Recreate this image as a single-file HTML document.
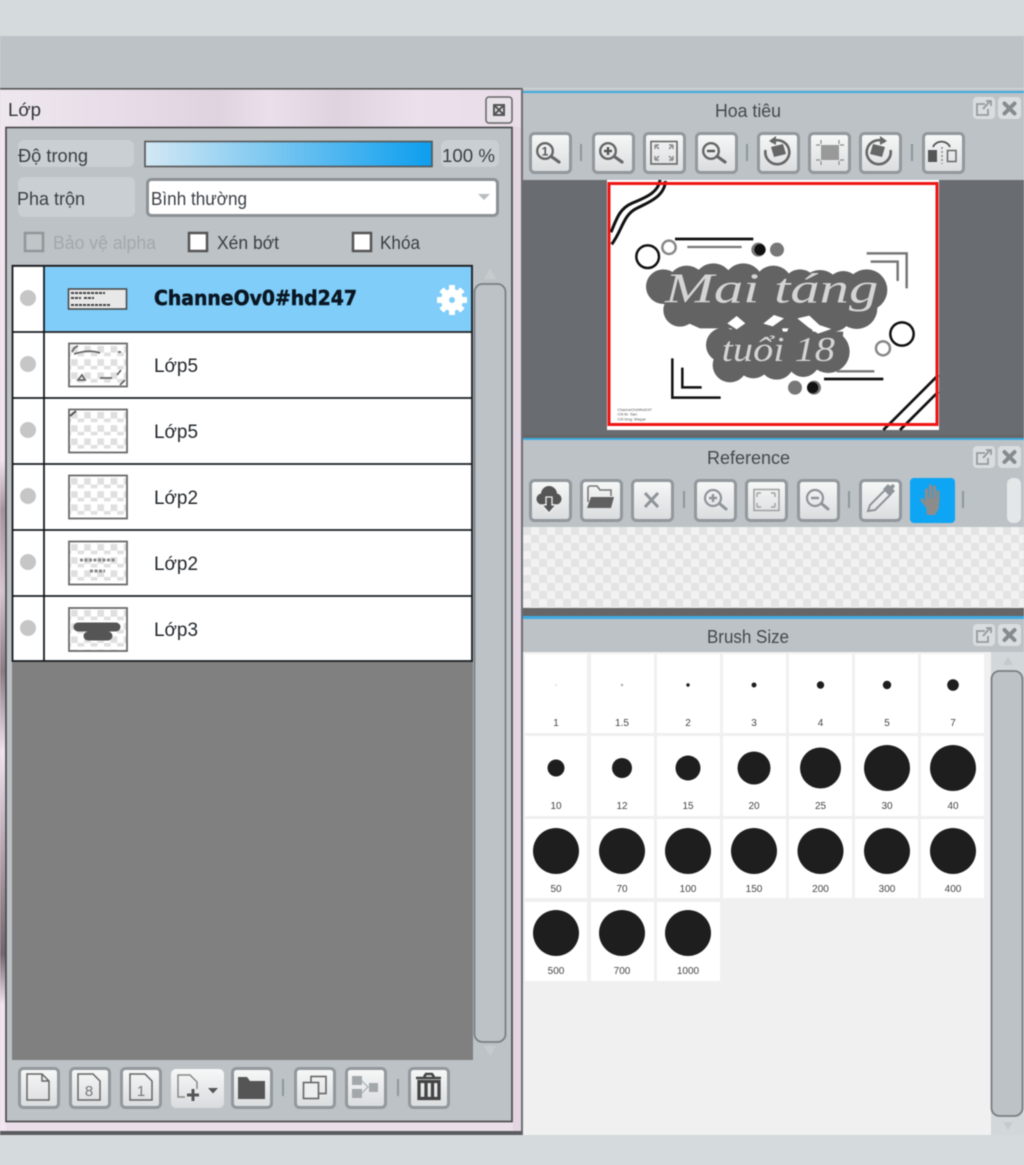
<!DOCTYPE html>
<html lang="vi"><head><meta charset="utf-8"><title>Lớp</title>
<style>
html,body{margin:0;padding:0;width:1024px;height:1165px;overflow:hidden;background:#d5dadc}
svg{display:block;position:absolute;left:0;top:0;filter:blur(.55px)}
text{font-family:"Liberation Sans","DejaVu Sans",sans-serif;fill:#3a3f44}
.b{fill:url(#btn);stroke:#92989c;stroke-width:3}
.s{fill:#8f979b}
.t{fill:url(#chk);stroke:#6a6a6a;stroke-width:1.8}
.d{fill:#c6c6c6}
.l{font-size:19px;fill:#22272c}
.n{font-size:10px;fill:#444;text-anchor:middle}
.c{fill:#fff}
.k{fill:#1e1e1e}
.p{fill:#d9dde0}
.i{fill:none;stroke:#666;stroke-width:2.4}
.h{fill:none;stroke:#666;stroke-width:3.2;stroke-linecap:round}
.g{fill:none;stroke:#8f9498;stroke-width:2.2}
.gh{fill:none;stroke:#8f9498;stroke-width:3;stroke-linecap:round}
</style></head><body>
<svg width="1024" height="1165" viewBox="0 0 1024 1165" xmlns="http://www.w3.org/2000/svg">
<defs>
<linearGradient id="btn" x1="0" y1="0" x2="0" y2="1"><stop offset="0" stop-color="#f7f8f8"/><stop offset="1" stop-color="#d9dcde"/></linearGradient>
<linearGradient id="op" x1="0" y1="0" x2="1" y2="0"><stop offset="0" stop-color="#d3e8f4"/><stop offset="1" stop-color="#0c9eee"/></linearGradient>
<linearGradient id="ttl" x1="0" y1="0" x2="1" y2="0"><stop offset="0" stop-color="#efe8ef"/><stop offset=".28" stop-color="#e6dae7"/><stop offset=".42" stop-color="#dfd3e0"/><stop offset=".52" stop-color="#eadfea"/><stop offset=".65" stop-color="#dfd3e0"/><stop offset=".8" stop-color="#ebe0eb"/><stop offset="1" stop-color="#e8dde8"/></linearGradient>
<linearGradient id="edge" x1="0" y1="0" x2="0" y2="1"><stop offset="0" stop-color="#f3e6f2"/><stop offset=".33" stop-color="#f0e3ef"/><stop offset=".38" stop-color="#a8949f"/><stop offset=".46" stop-color="#d5c4cf"/><stop offset=".54" stop-color="#8c7c86"/><stop offset=".62" stop-color="#f1e3ef"/><stop offset=".72" stop-color="#b5a3ae"/><stop offset=".82" stop-color="#75666f"/><stop offset=".87" stop-color="#f0e3ef"/><stop offset="1" stop-color="#f3e6f2"/></linearGradient>
<pattern id="chk" width="13.2" height="13.2" patternUnits="userSpaceOnUse" x="68" y="343"><rect width="13.2" height="13.2" fill="#fff"/><rect x="3" y="3" width="6.6" height="6.6" fill="#dfdfdf"/><rect x="9.6" y="9.6" width="3.6" height="3.6" fill="#dfdfdf"/><rect y="9.6" width="3" height="3.6" fill="#dfdfdf"/></pattern>
<pattern id="ref" width="16" height="16" patternUnits="userSpaceOnUse" x="523" y="527"><rect width="16" height="16" fill="#f2f2f2"/><rect width="8" height="8" fill="#e4e4e4"/><rect x="8" y="8" width="8" height="8" fill="#e4e4e4"/></pattern>
</defs>

<!-- background -->
<rect x="-4" y="-4" width="1032" height="40" fill="#d5dadc"/>
<rect x="-4" y="36" width="1032" height="52" fill="#bcc2c5"/>
<rect x="-4" y="1135" width="1032" height="34" fill="#d5dadc"/>

<!-- LEFT PANEL -->
<rect x="-4" y="88" width="527" height="1047" fill="#eadfe9"/>
<rect x="-4" y="88" width="526" height="1.6" fill="#555"/>
<rect x="-4" y="90" width="525" height="37" fill="url(#ttl)"/>
<rect x="-4" y="127" width="10" height="1008" fill="url(#edge)"/>
<rect x="513" y="127" width="8" height="1005" fill="#e3d5e2"/>
<rect x="521" y="88" width="2" height="1047" fill="#6d6f73"/>
<rect x="-4" y="1131" width="526" height="4" fill="#5a5c60"/>
<rect x="6" y="127.500" width="506" height="994" fill="#bcc2c5" stroke="#444" stroke-width="1.6"/>
<text x="8" y="116" font-size="18" textLength="33" lengthAdjust="spacingAndGlyphs" style="fill:#2f3338">Lớp</text>
<rect x="486" y="97" width="26" height="26" rx="3" fill="#e6e2e8" stroke="#666" stroke-width="1.5"/>
<path d="M494 105h10v10h-10z M494 105l10 10 M504 105l-10 10" fill="none" stroke="#555" stroke-width="2"/>

<rect x="18" y="140" width="116" height="27" rx="6" fill="#c9cfd2"/>
<text x="18" y="162" font-size="18" textLength="70" lengthAdjust="spacingAndGlyphs">Độ trong</text>
<rect x="145" y="141.500" width="287" height="25" fill="url(#op)" stroke="#555" stroke-width="1.6"/>
<rect x="441" y="140" width="58" height="27" rx="6" fill="#c9cfd2"/>
<text x="442" y="162" font-size="18" textLength="53" lengthAdjust="spacingAndGlyphs">100 %</text>
<rect x="18" y="177" width="117" height="40" rx="6" fill="#c9cfd2"/>
<text x="17" y="205" font-size="18" textLength="68" lengthAdjust="spacingAndGlyphs">Pha trộn</text>
<rect x="147.500" y="179.500" width="350" height="36" rx="4" fill="#fff" stroke="#8b9195" stroke-width="3"/>
<text x="151" y="205" font-size="18" textLength="96" lengthAdjust="spacingAndGlyphs">Bình thường</text>
<path d="M478 194h12l-6 6z" fill="#b9bdc0"/>

<rect x="25" y="233" width="18" height="18" fill="#c0c5c8" stroke="#90969a" stroke-width="2.500"/>
<text x="53" y="249" font-size="18" textLength="103" lengthAdjust="spacingAndGlyphs" style="fill:#a2a8ab">Bảo vệ alpha</text>
<rect x="189" y="233" width="18" height="18" fill="#fff" stroke="#555" stroke-width="2.500"/>
<text x="217" y="249" font-size="18" textLength="62" lengthAdjust="spacingAndGlyphs">Xén bớt</text>
<rect x="353" y="233" width="18" height="18" fill="#fff" stroke="#555" stroke-width="2.500"/>
<text x="380" y="249" font-size="18" textLength="40" lengthAdjust="spacingAndGlyphs">Khóa</text>

<!-- list -->
<rect x="12" y="660" width="461" height="400" fill="#808080"/>
<rect x="13" y="267" width="459" height="394" fill="#fff"/>
<rect x="44" y="267" width="428" height="64" fill="#7fcdf8"/>
<path d="M12.500 265.800H472V661H12.500z M13 332H472 M13 398H472 M13 464H472 M13 530H472 M13 596H472 M44 266V661" fill="none" stroke="#171b20" stroke-width="1.800"/>
<circle class="d" cx="28" cy="298" r="8"/><circle class="d" cx="28" cy="364" r="8"/><circle class="d" cx="28" cy="430" r="8"/><circle class="d" cx="28" cy="496" r="8"/><circle class="d" cx="28" cy="562" r="8"/><circle class="d" cx="28" cy="628" r="8"/>

<rect x="68.500" y="289" width="58" height="20" fill="#e8e8e8" stroke="#444" stroke-width="1.500"/>
<path d="M71 293h34M71 298h10M84 298h10M71 305h40" stroke="#444" stroke-width="2" stroke-dasharray="3 1"/>
<rect class="t" x="69" y="343.500" width="58" height="43"/>
<path d="M72 352q2-5 6-6M74 354q15-5 26-1M118 352h3M78 380l4-5 3 5zM100 378h12M117 375l4-5M120 385l5-5" fill="none" stroke="#666" stroke-width="1.800"/>
<rect class="t" x="69" y="409.500" width="58" height="43"/>
<path d="M70 416l6-5" stroke="#555" stroke-width="2"/>
<rect class="t" x="69" y="475.500" width="58" height="43"/>
<rect class="t" x="69" y="541.500" width="58" height="43"/>
<path d="M80 560h36M90 571h15" fill="none" stroke="#888" stroke-width="3" stroke-dasharray="3 1.500"/>
<rect class="t" x="69" y="608" width="58" height="43"/>
<path d="M78 627h38M88 636h20" stroke="#555" stroke-width="9" stroke-linecap="round"/>

<text x="154" y="305" font-size="20" textLength="203" lengthAdjust="spacingAndGlyphs" font-weight="bold" style="font-family:'DejaVu Sans',sans-serif;fill:#0a1622;stroke:#0a1622;stroke-width:.5">ChanneOv0#hd247</text>
<text class="l" x="154" y="372" textLength="44" lengthAdjust="spacingAndGlyphs">Lớp5</text>
<text class="l" x="154" y="438" textLength="44" lengthAdjust="spacingAndGlyphs">Lớp5</text>
<text class="l" x="154" y="504" textLength="44" lengthAdjust="spacingAndGlyphs">Lớp2</text>
<text class="l" x="154" y="570" textLength="44" lengthAdjust="spacingAndGlyphs">Lớp2</text>
<text class="l" x="154" y="636" textLength="44" lengthAdjust="spacingAndGlyphs">Lớp3</text>
<g stroke="#fff" stroke-width="6" stroke-linecap="butt"><path d="M452 285v30M437 300h30M441.500 289.500l21 21M462.500 289.500l-21 21"/></g>
<circle cx="452" cy="300" r="11" fill="#fff"/><circle cx="452" cy="300" r="3" fill="#7fcdf8"/>

<!-- left scrollbar -->
<path d="M490 268l-6 11h12z" fill="#c6cbce"/>
<rect x="474.500" y="284" width="31" height="758" rx="8" fill="#bcc2c5" stroke="#7a8185" stroke-width="1.800"/>
<path d="M490 1056l-6-10h12z" fill="#c6cbce"/>

<!-- bottom toolbar -->
<rect class="b" x="19.500" y="1068.500" width="39" height="39" rx="4"/>
<rect class="b" x="70.500" y="1068.500" width="39" height="39" rx="4"/>
<rect class="b" x="121.500" y="1068.500" width="39" height="39" rx="4"/>
<rect x="171" y="1069" width="53" height="39" rx="5" fill="url(#btn)"/>
<rect class="b" x="232.500" y="1068.500" width="39" height="39" rx="4"/>
<rect class="s" x="282" y="1079" width="2" height="17"/>
<rect class="b" x="295.500" y="1068.500" width="39" height="39" rx="4"/>
<rect class="b" x="346.500" y="1068.500" width="39" height="39" rx="4"/>
<rect class="s" x="397" y="1079" width="2" height="17"/>
<rect class="b" x="409.500" y="1068.500" width="39" height="39" rx="4"/>
<path d="M27 1074h15l7 7v19H27z M42 1074v7h7" fill="none" stroke="#666" stroke-width="1.500"/>
<path d="M78 1074h15l7 7v19H78z" fill="none" stroke="#666" stroke-width="1.500"/>
<text x="89" y="1096" font-size="15" text-anchor="middle" style="fill:#777">8</text>
<path d="M130 1074h15l7 7v19h-22z" fill="none" stroke="#666" stroke-width="1.500"/>
<text x="141" y="1096" font-size="15" text-anchor="middle" style="fill:#777">1</text>
<path d="M185 1097h-7v-22h12l7 7v7" fill="none" stroke="#888" stroke-width="1.500"/>
<path d="M193 1089v12M187 1095h12" stroke="#555" stroke-width="3"/>
<path d="M208 1088h10l-5 5.500z" fill="#555"/>
<path d="M238 1099v-22h9l3 4h15v18z" fill="#555"/>
<rect x="311" y="1076.500" width="15" height="17" fill="none" stroke="#666" stroke-width="1.600"/>
<rect x="303.500" y="1082.500" width="15" height="16" fill="#eceeef" stroke="#666" stroke-width="1.600"/>
<rect x="352" y="1076" width="10" height="9" fill="#a2a7aa"/><rect x="352" y="1089" width="10" height="9" fill="#a2a7aa"/><rect x="369" y="1083" width="9" height="9" fill="#a2a7aa"/>
<path d="M362 1081l6 6-6 6" fill="none" stroke="#a2a7aa" stroke-width="1"/>
<path d="M416 1078h25M424 1077l2-3h6l2 3" fill="none" stroke="#444" stroke-width="2.500"/>
<path d="M419 1081.500h20v17h-20z M426 1082v16M432.500 1082v16" fill="none" stroke="#444" stroke-width="3.300"/>

<!-- RIGHT: Navigator -->
<rect x="523" y="89" width="505" height="91" fill="#bcc2c5"/>
<rect x="523" y="91" width="505" height="2" fill="#3faae2"/>
<text x="715" y="117" font-size="18" textLength="66" lengthAdjust="spacingAndGlyphs" style="fill:#45494e">Hoa tiêu</text>
<rect class="p" x="973" y="97" width="22" height="22" rx="4"/><rect class="p" x="998" y="97" width="23" height="22" rx="4"/>
<path d="M985 104h-8v11h11v-6M983 109l7-8M986 101h5v5" fill="none" stroke="#949a9e" stroke-width="1.800"/>
<path d="M1004.500 103.500l10 10M1014.500 103.500l-10 10" stroke="#858b8f" stroke-width="4" stroke-linecap="round"/>

<rect x="523" y="180" width="505" height="257" fill="#696c70"/>
<rect x="607" y="180" width="332" height="250" fill="#fff"/>

<rect class="b" x="530.500" y="133.500" width="40" height="39" rx="4"/>
<rect class="s" x="580" y="144" width="2" height="17"/>
<rect class="b" x="593.500" y="133.500" width="40" height="39" rx="4"/>
<rect class="b" x="644.500" y="133.500" width="40" height="39" rx="4"/>
<rect class="b" x="696.500" y="133.500" width="40" height="39" rx="4"/>
<rect class="s" x="746" y="144" width="2" height="17"/>
<rect class="b" x="758.500" y="133.500" width="40" height="39" rx="4"/>
<rect class="b" x="809.500" y="133.500" width="40" height="39" rx="4"/>
<rect class="b" x="860.500" y="133.500" width="40" height="39" rx="4"/>
<rect class="s" x="911" y="144" width="2" height="17"/>
<rect class="b" x="923.500" y="133.500" width="40" height="39" rx="4"/>

<circle class="i" cx="545" cy="151" r="7.800"/><path class="h" d="M552 157l7 5"/><text x="545" y="155.500" font-size="12" font-weight="bold" text-anchor="middle" style="fill:#555">1</text>
<circle class="i" cx="608" cy="151" r="7.800"/><path class="h" d="M615 157l7 5"/><path d="M604 151h8M608 147v8" stroke="#555" stroke-width="2.400"/>
<rect x="651" y="141.500" width="26" height="22.500" fill="none" stroke="#666" stroke-width="1.600"/><path d="M655 145h4M655 145v4M673 145h-4M673 145v4M655 160h4M655 160v-4M673 160h-4M673 160v-4M655 145l4 4M673 145l-4 4M655 160l4-4M673 160l-4-4" stroke="#888" stroke-width="1.400" fill="none"/>
<circle class="i" cx="711" cy="151" r="7.800"/><path class="h" d="M718 157l7 5"/><path d="M707 151h8" stroke="#555" stroke-width="2.400"/>
<path d="M771 142a12 12 0 1 1-5.500 8" fill="none" stroke="#666" stroke-width="2.600"/><path d="M776 136v9l-7-4z" fill="#666"/><path d="M771 147l12-3 3 10-12 3z" fill="#666"/>
<rect x="821" y="145" width="18" height="15" fill="#999"/><path d="M816 145h4M840 145h4M816 160h4M840 160h4M821 140v4M839 140v4M821 161v4M839 161v4" stroke="#8a8a8a" stroke-width="1.200"/>
<path d="M885 142a12 12 0 1 0 5.500 8" fill="none" stroke="#666" stroke-width="2.600"/><path d="M880 136v9l7-4z" fill="#666"/><path d="M873 144l12 3-3 10-12-3z" fill="#666"/>
<rect x="928" y="150" width="9" height="12" fill="#555"/><rect x="947.500" y="150.500" width="8.500" height="11" fill="none" stroke="#666" stroke-width="1.500"/><path d="M942 147v17" stroke="#888" stroke-dasharray="2 2" stroke-width="1.500"/><path d="M933 147a9 8 0 0 1 17 0" fill="none" stroke="#555" stroke-width="1.800"/>

<!-- preview art, coordinates in 3x -->
<g transform="translate(600 175) scale(.33333)">
<g fill="#636363">
<circle cx="190" cy="335" r="52"/><circle cx="260" cy="330" r="58"/><circle cx="340" cy="325" r="60"/><circle cx="430" cy="325" r="60"/><circle cx="520" cy="330" r="58"/><circle cx="600" cy="335" r="52"/><circle cx="660" cy="345" r="60"/><circle cx="730" cy="340" r="52"/><circle cx="800" cy="345" r="62"/><circle cx="240" cy="405" r="50"/><circle cx="300" cy="385" r="52"/><circle cx="700" cy="415" r="55"/><circle cx="770" cy="400" r="62"/><circle cx="640" cy="400" r="50"/><circle cx="480" cy="400" r="60"/><circle cx="380" cy="400" r="50"/><circle cx="560" cy="400" r="50"/>
<circle cx="370" cy="510" r="52"/><circle cx="390" cy="570" r="52"/><circle cx="460" cy="558" r="52"/><circle cx="530" cy="562" r="52"/><circle cx="610" cy="558" r="48"/><circle cx="685" cy="530" r="64"/><circle cx="430" cy="480" r="40"/><circle cx="600" cy="480" r="40"/><circle cx="500" cy="480" r="50"/>
<path d="M190 320H830V380L720 460H300L210 420zM340 470H730L720 570 400 600 340 540z"/>
</g>
<path d="M382 445l28-22 26 22-26 18zM490 446l32-26 30 10-34 24zM592 430l36-8 30 28 36 12-40 14-30-20z" fill="#fff"/>
<text x="195" y="382" font-size="128" textLength="640" lengthAdjust="spacingAndGlyphs" style="font-family:'Liberation Serif',serif;font-style:italic;fill:#d4d4d4">Mai táng</text>
<text x="365" y="558" font-size="104" textLength="340" lengthAdjust="spacingAndGlyphs" style="font-family:'Liberation Serif',serif;font-style:italic;fill:#d4d4d4">tuổi 18</text>
<g fill="none" stroke-linecap="butt">
<path d="M225 192H460M672 612H850" stroke="#111" stroke-width="8"/>
<path d="M262 216H425M710 589H823" stroke="#777" stroke-width="7"/>
<circle cx="143" cy="245" r="34" stroke="#111" stroke-width="7.500"/><circle cx="207" cy="217" r="20" stroke="#888" stroke-width="7.500"/>
<circle cx="906" cy="477" r="35" stroke="#111" stroke-width="7.500"/><circle cx="849" cy="520" r="21" stroke="#888" stroke-width="7.500"/>
<path d="M800 235H920V340M812 260H893V318" stroke="#777" stroke-width="7.500"/>
<path d="M217 550V668H362M247 578V637H305" stroke="#111" stroke-width="7.500"/>
<path d="M180 15C175 55 130 70 95 85C60 100 50 130 33 172M196 18C195 65 140 85 110 100C70 118 65 170 35 208" stroke="#111" stroke-width="9"/>
<path d="M1015 600L850 765M1015 650L900 765" stroke="#111" stroke-width="8"/>
</g>
<circle cx="475" cy="224" r="21" fill="#777"/><circle cx="480" cy="224" r="17" fill="#111"/>
<circle cx="531" cy="224" r="21" fill="#777"/><circle cx="585" cy="638" r="21" fill="#777"/>
<circle cx="642" cy="638" r="21" fill="#777"/><circle cx="638" cy="638" r="17" fill="#111"/>
<text x="52" y="708" font-size="12" style="fill:#555">ChanneOv0#hd247</text>
<text x="52" y="722" font-size="12" style="fill:#555">Chỉ tb: Sạn</text>
<text x="52" y="737" font-size="12" style="fill:#555">Chỉ lồng: Mayye</text>
</g>
<rect x="609" y="183.500" width="328" height="241" fill="none" stroke="#ee1515" stroke-width="3"/>

<!-- Reference -->
<rect x="523" y="435" width="505" height="3" fill="#666"/>
<rect x="523" y="438" width="505" height="2" fill="#3faae2"/>
<rect x="523" y="440" width="505" height="87" fill="#bcc2c5"/>
<text x="707" y="464" font-size="18" textLength="83" lengthAdjust="spacingAndGlyphs" style="fill:#45494e">Reference</text>
<rect class="p" x="973" y="446" width="22" height="22" rx="4"/><rect class="p" x="998" y="446" width="23" height="22" rx="4"/>
<path d="M985 453h-8v11h11v-6M983 458l7-8M986 450h5v5" fill="none" stroke="#949a9e" stroke-width="1.800"/>
<path d="M1004.500 452l10 10M1014.500 452l-10 10" stroke="#858b8f" stroke-width="4" stroke-linecap="round"/>
<rect class="b" x="530.500" y="480.500" width="40" height="40" rx="4"/>
<rect class="b" x="581.500" y="480.500" width="40" height="40" rx="4"/>
<rect class="b" x="632.500" y="480.500" width="40" height="40" rx="4"/>
<rect class="s" x="683" y="491" width="2" height="17"/>
<rect class="b" x="695.500" y="480.500" width="40" height="40" rx="4"/>
<rect class="b" x="746.500" y="480.500" width="40" height="40" rx="4"/>
<rect class="b" x="798.500" y="480.500" width="40" height="40" rx="4"/>
<rect class="s" x="848" y="491" width="2" height="17"/>
<rect class="b" x="860.500" y="480.500" width="40" height="40" rx="4"/>
<rect x="910" y="478" width="45" height="45" rx="4" fill="#0ea5f5"/>
<rect class="s" x="962" y="491" width="2" height="17"/>
<rect x="1007" y="478" width="14" height="45" rx="6" fill="#e4e7e8"/>
<g fill="#555"><circle cx="549" cy="494" r="8"/><circle cx="542" cy="499" r="5.500"/><circle cx="556" cy="499" r="5.500"/><path d="M542 499h14v5h-14z"/></g>
<path d="M546 497h6v8h4l-7 8-7-8h4z" fill="#555" stroke="#eee" stroke-width="1.300"/>
<path d="M588 502v-14a2 2 0 0 1 2-2h7l3 4h11v6" fill="none" stroke="#777" stroke-width="1.600"/>
<path d="M587 508l4-11h23l-3 11z" fill="#606060"/>
<path d="M645 493l13 14M658 493l-13 14" stroke="#8f9498" stroke-width="3"/>
<circle class="g" cx="713" cy="498" r="8"/><path class="gh" d="M720 504l6 5"/><path d="M709 498h8M713 494v8" stroke="#8f9498" stroke-width="2.400"/>
<rect x="754" y="489.500" width="25" height="21" fill="none" stroke="#a0a0a0" stroke-width="1.500"/><path d="M757 493h4M757 493v4M775 493h-4M775 493v4M757 507h4M757 507v-4M775 507h-4M775 507v-4" stroke="#a0a0a0" stroke-width="1.400" fill="none"/>
<circle class="g" cx="815" cy="498" r="8"/><path class="gh" d="M822 504l6 5"/><path d="M811 498h8" stroke="#8f9498" stroke-width="2.400"/>
<path d="M868 511l2-6 15-15 5 5-15 15z" fill="none" stroke="#8f9498" stroke-width="2"/><path d="M883 489l5-5 2 2 3-2 2 2-2 3 2 2-5 5z" fill="#8f9498"/>
<path d="M925 498h14v10l-4 7h-8z" fill="#8c8c8c"/><path d="M926.500 500v-10M930.500 499v-13M934.500 499v-12M938 501v-9M926 505l-4-5" stroke="#8c8c8c" stroke-width="3.200" stroke-linecap="round"/>
<rect x="523" y="527" width="505" height="81" fill="url(#ref)"/>

<!-- Brush Size -->
<rect x="523" y="608" width="505" height="8" fill="#666"/>
<rect x="523" y="616" width="505" height="3" fill="#3faae2"/>
<rect x="523" y="619" width="505" height="33" fill="#bcc2c5"/>
<text x="707" y="643" font-size="18" textLength="82" lengthAdjust="spacingAndGlyphs" style="fill:#45494e">Brush Size</text>
<rect class="p" x="973" y="624" width="22" height="22" rx="4"/><rect class="p" x="998" y="624" width="23" height="22" rx="4"/>
<path d="M985 631h-8v11h11v-6M983 636l7-8M986 628h5v5" fill="none" stroke="#949a9e" stroke-width="1.800"/>
<path d="M1004.500 630l10 10M1014.500 630l-10 10" stroke="#858b8f" stroke-width="4" stroke-linecap="round"/>
<rect x="523" y="652" width="468" height="483" fill="#f0f0f0"/>
<rect x="991" y="652" width="37" height="483" fill="#d2d7da"/>
<path d="M1008 657l-5 8h10z" fill="#c5cacd"/>
<rect x="991.500" y="671" width="31" height="445" rx="8" fill="#bcc2c5" stroke="#787f83" stroke-width="1.800"/>
<path d="M1008 1130l-5-8h10z" fill="#c5cacd"/>

<g>
<rect class="c" x="525" y="654" width="62" height="79"/><rect class="c" x="591" y="654" width="63" height="79"/><rect class="c" x="657" y="654" width="63" height="79"/><rect class="c" x="723" y="654" width="63" height="79"/><rect class="c" x="789" y="654" width="63" height="79"/><rect class="c" x="855" y="654" width="63" height="79"/><rect class="c" x="921" y="654" width="63" height="79"/>
<rect class="c" x="525" y="736" width="62" height="80"/><rect class="c" x="591" y="736" width="63" height="80"/><rect class="c" x="657" y="736" width="63" height="80"/><rect class="c" x="723" y="736" width="63" height="80"/><rect class="c" x="789" y="736" width="63" height="80"/><rect class="c" x="855" y="736" width="63" height="80"/><rect class="c" x="921" y="736" width="63" height="80"/>
<rect class="c" x="525" y="819" width="62" height="79"/><rect class="c" x="591" y="819" width="63" height="79"/><rect class="c" x="657" y="819" width="63" height="79"/><rect class="c" x="723" y="819" width="63" height="79"/><rect class="c" x="789" y="819" width="63" height="79"/><rect class="c" x="855" y="819" width="63" height="79"/><rect class="c" x="921" y="819" width="63" height="79"/>
<rect class="c" x="525" y="902" width="62" height="79"/><rect class="c" x="591" y="902" width="63" height="79"/><rect class="c" x="657" y="902" width="63" height="79"/>
</g>
<circle cx="556" cy="685" r="1" fill="#ddd"/><circle cx="622" cy="685" r="1.200" fill="#aaa"/><circle class="k" cx="688" cy="685" r="1.700"/><circle class="k" cx="754" cy="685" r="2.500"/><circle class="k" cx="820.500" cy="685" r="3.700"/><circle class="k" cx="887" cy="685" r="4.200"/><circle class="k" cx="953" cy="685" r="5.800"/>
<circle class="k" cx="556" cy="768" r="8.500"/><circle class="k" cx="622" cy="768" r="10"/><circle class="k" cx="688" cy="768" r="12.500"/><circle class="k" cx="754" cy="768" r="16.500"/><circle class="k" cx="820.500" cy="768" r="20.500"/><circle class="k" cx="887" cy="768" r="23"/><circle class="k" cx="953" cy="768" r="23"/>
<circle class="k" cx="556" cy="851" r="23"/><circle class="k" cx="622" cy="851" r="23"/><circle class="k" cx="688" cy="851" r="23"/><circle class="k" cx="754" cy="851" r="23"/><circle class="k" cx="820.500" cy="851" r="23"/><circle class="k" cx="887" cy="851" r="23"/><circle class="k" cx="953" cy="851" r="23"/>
<circle class="k" cx="556" cy="933" r="23"/><circle class="k" cx="622" cy="933" r="23"/><circle class="k" cx="688" cy="933" r="23"/>
<text class="n" x="556" y="726">1</text><text class="n" x="622" y="726">1.5</text><text class="n" x="688" y="726">2</text><text class="n" x="754" y="726">3</text><text class="n" x="820.500" y="726">4</text><text class="n" x="887" y="726">5</text><text class="n" x="953" y="726">7</text>
<text class="n" x="556" y="809">10</text><text class="n" x="622" y="809">12</text><text class="n" x="688" y="809">15</text><text class="n" x="754" y="809">20</text><text class="n" x="820.500" y="809">25</text><text class="n" x="887" y="809">30</text><text class="n" x="953" y="809">40</text>
<text class="n" x="556" y="892">50</text><text class="n" x="622" y="892">70</text><text class="n" x="688" y="892">100</text><text class="n" x="754" y="892">150</text><text class="n" x="820.500" y="892">200</text><text class="n" x="887" y="892">300</text><text class="n" x="953" y="892">400</text>
<text class="n" x="556" y="974">500</text><text class="n" x="622" y="974">700</text><text class="n" x="688" y="974">1000</text>
</svg>
</body></html>
